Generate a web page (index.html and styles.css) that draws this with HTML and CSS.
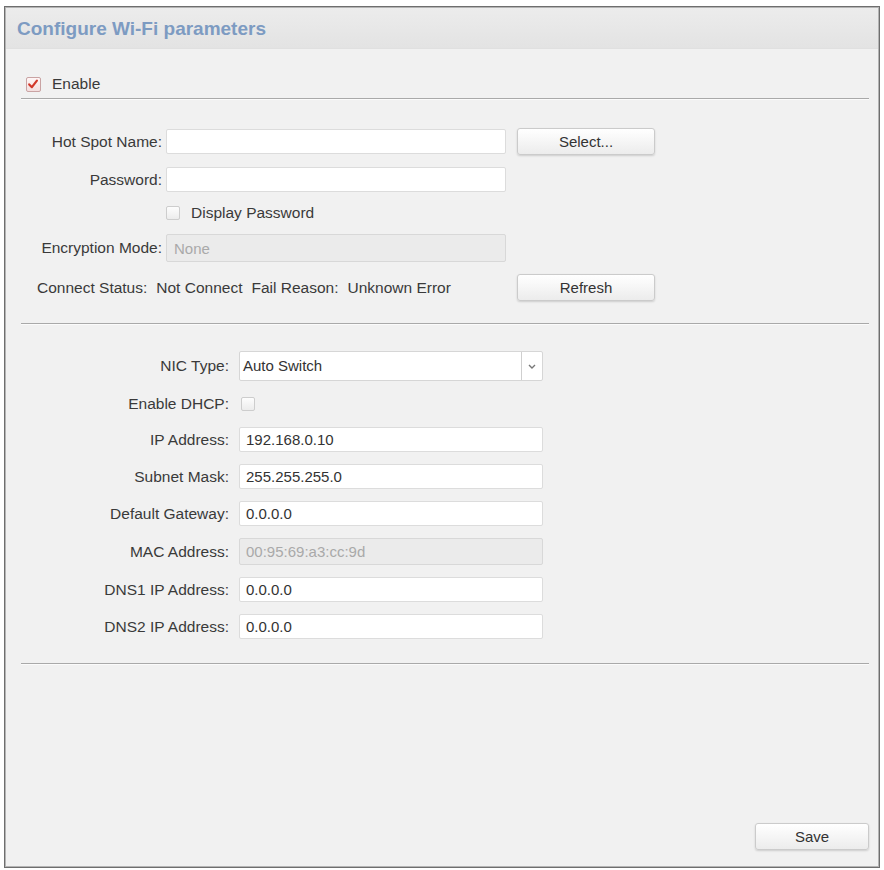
FILE: index.html
```html
<!DOCTYPE html>
<html lang="en">
<head>
    <meta charset="UTF-8">
    <meta name="viewport" content="width=device-width, initial-scale=1.0">
    <title>Configure Wi-Fi parameters</title>
    <link rel="stylesheet" href="styles.css">
</head>
<body>
    <div class="panel">
        <div class="panel-head">Configure Wi-Fi parameters</div>

        <div class="panel-body">
            <label class="check-row enable-row">
                <span class="check checked">
                    <svg viewBox="0 0 14 14" width="14" height="14"><path d="M3.2 7.4 L5.9 10.2 L10.9 3.6" fill="none" stroke="#d2382a" stroke-width="2.2" stroke-linecap="round" stroke-linejoin="round"/></svg>
                </span>
                Enable
            </label>
            <hr class="divider">

            <div class="wifi-grid">
                <label class="field-label" for="hotspot">Hot Spot Name:</label>
                <input type="text" id="hotspot" class="field">
                <button type="button" class="btn">Select...</button>

                <label class="field-label" for="password">Password:</label>
                <input type="password" id="password" class="field">
                <span></span>

                <span></span>
                <label class="check-row">
                    <span class="check"></span>
                    Display Password
                </label>
                <span></span>

                <label class="field-label" for="encryption">Encryption Mode:</label>
                <input type="text" id="encryption" class="field" value="None" disabled>
                <span></span>

                <div class="status">
                    <span>Connect Status:</span>
                    <span>Not Connect</span>
                    <span>Fail Reason:</span>
                    <span>Unknown Error</span>
                </div>
                <button type="button" class="btn">Refresh</button>
            </div>
            <hr class="divider">

            <div class="ip-grid">
                <label class="field-label">NIC Type:</label>
                <div class="select">
                    <span class="select-value">Auto Switch</span>
                    <span class="select-arrow">
                        <svg viewBox="0 0 8 5" width="8" height="5"><path d="M1 1 L4 4 L7 1" fill="none" stroke="#777" stroke-width="1.4"/></svg>
                    </span>
                </div>

                <label class="field-label">Enable DHCP:</label>
                <div><span class="check dhcp"></span></div>

                <label class="field-label" for="ip">IP Address:</label>
                <input type="text" id="ip" class="field" value="192.168.0.10">

                <label class="field-label" for="mask">Subnet Mask:</label>
                <input type="text" id="mask" class="field" value="255.255.255.0">

                <label class="field-label" for="gateway">Default Gateway:</label>
                <input type="text" id="gateway" class="field" value="0.0.0.0">

                <label class="field-label" for="mac">MAC Address:</label>
                <input type="text" id="mac" class="field tall" value="00:95:69:a3:cc:9d" disabled>

                <label class="field-label" for="dns1">DNS1 IP Address:</label>
                <input type="text" id="dns1" class="field" value="0.0.0.0">

                <label class="field-label" for="dns2">DNS2 IP Address:</label>
                <input type="text" id="dns2" class="field" value="0.0.0.0">
            </div>
            <hr class="divider">
        </div>

        <div class="panel-foot">
            <button type="button" class="btn save">Save</button>
        </div>
    </div>
</body>
</html>
```

FILE: styles.css
```css
* {
    box-sizing: border-box;
    margin: 0;
    padding: 0;
}

body {
    font-family: "Liberation Sans", Arial, sans-serif;
    font-size: 15.5px;
    color: #3a3a3a;
    background-color: #fff;
}

.panel {
    display: flex;
    flex-direction: column;
    width: 876px;
    height: 862px;
    margin: 6px 0 0 4px;
    background-color: #f1f1f1;
    border: 1px solid #6e6e6e;
    box-shadow: inset 0 0 0 1px #b4b4b4;
}

.panel-head {
    height: 41px;
    margin: 1px 1px 0;
    padding-left: 11px;
    line-height: 41px;
    font-size: 19px;
    font-weight: bold;
    color: #7d9bc2;
    background: linear-gradient(#ececec, #e3e3e3);
    border-bottom: 1px solid #e0e0e0;
}

.panel-body {
    padding: 0 10px 0 16px;
}

.divider {
    border: none;
    border-top: 1px solid #a9a9a9;
    border-bottom: 1px solid #fbfbfb;
}

.enable-row {
    height: 20px;
    margin: 25px 0 4px 5px;
}

/* checkbox rows */
.check-row {
    display: flex;
    align-items: center;
    gap: 11px;
}

.check {
    display: inline-block;
    width: 14px;
    height: 14px;
    border: 1px solid #cdcdcd;
    border-radius: 2px;
    background: linear-gradient(#fdfdfd, #ececec);
}

.check svg {
    display: block;
    margin: -1px;
}

.check.checked {
    width: 15px;
    height: 15px;
    border-color: #c9a3a3;
    background: linear-gradient(#fff6f6, #f3dede);
}

.check.dhcp {
    margin: 4px 0 0 2px;
}

/* form grids */
.wifi-grid {
    display: grid;
    grid-template-columns: 127px 347px 138px;
    column-gap: 4px;
    row-gap: 12px;
    align-items: center;
    margin: 28px 0 22px 14px;
}

.ip-grid {
    display: grid;
    grid-template-columns: 130px 304px;
    column-gap: 10px;
    row-gap: 12px;
    align-items: center;
    margin: 26px 0 24px 78px;
}

.field-label {
    text-align: right;
    white-space: nowrap;
}

.field {
    width: 340px;
    height: 25px;
    padding: 0 6px;
    font-family: inherit;
    font-size: 15px;
    color: #333;
    background-color: #fff;
    border: 1px solid #dcdcdc;
    border-radius: 2px;
    outline: none;
}

.ip-grid .field {
    width: 304px;
}

.field:disabled {
    color: #a9a9a9;
    background-color: #ebebeb;
    border-color: #d8d8d8;
}

.field.tall {
    height: 27px;
}

#encryption {
    height: 28px;
    padding-left: 7px;
}

.status {
    grid-column: 1 / 3;
    display: flex;
    gap: 9px;
    padding-left: 2px;
    white-space: nowrap;
}

/* buttons */
.btn {
    height: 27px;
    font-family: inherit;
    font-size: 15px;
    color: #333;
    background: linear-gradient(#ffffff, #ececec);
    border: 1px solid #cbcbcb;
    border-radius: 3px;
    box-shadow: 0 1px 2px rgba(0, 0, 0, 0.15);
    cursor: pointer;
}

.wifi-grid .btn {
    width: 138px;
}

.btn:hover {
    background: linear-gradient(#ffffff, #e2e2e2);
}

/* NIC type dropdown */
.select {
    display: flex;
    width: 304px;
    height: 30px;
    background-color: #fff;
    border: 1px solid #d6d6d6;
    border-radius: 2px;
}

.select-value {
    flex: 1;
    padding-left: 3px;
    line-height: 28px;
    font-size: 15px;
    color: #333;
}

.select-arrow {
    display: flex;
    align-items: center;
    justify-content: center;
    width: 21px;
    border-left: 1px solid #cfcfcf;
}

.panel-foot {
    display: flex;
    justify-content: flex-end;
    margin-top: auto;
    padding: 0 10px 17px 0;
}

.btn.save {
    width: 114px;
}
```
